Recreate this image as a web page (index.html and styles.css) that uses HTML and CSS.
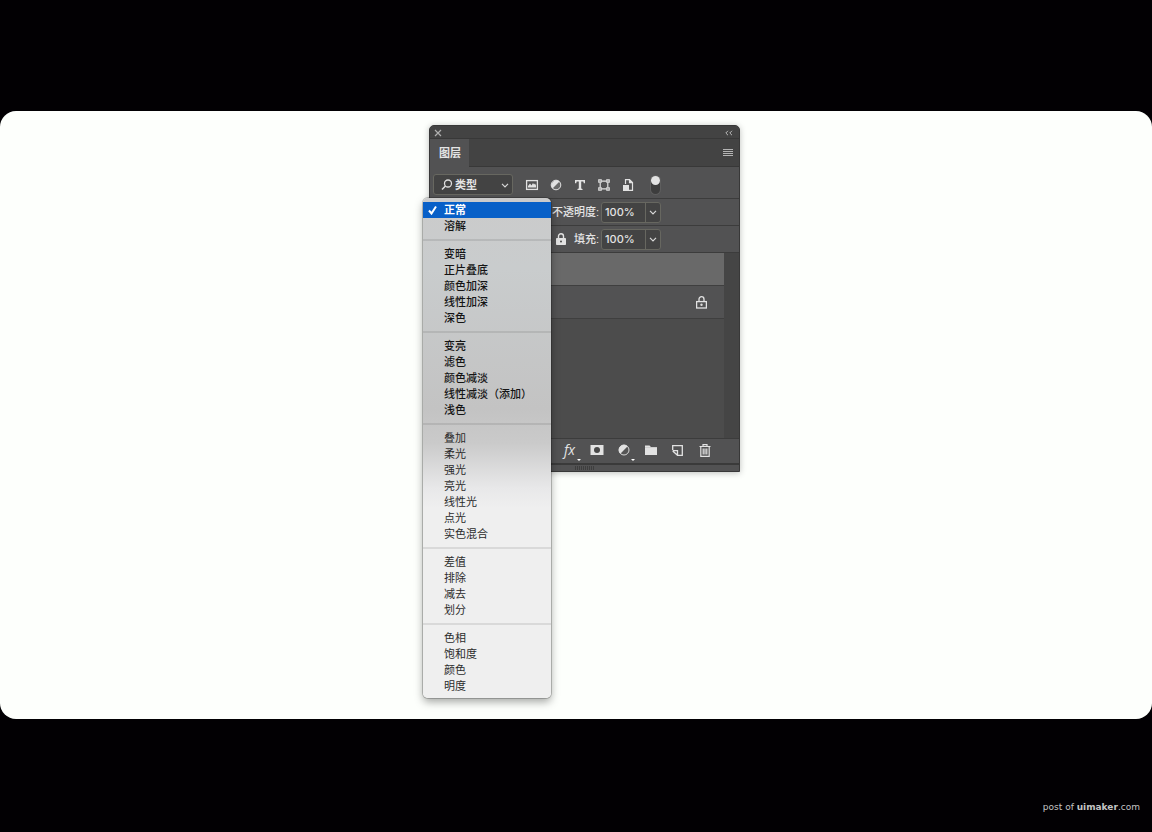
FILE: index.html
```
<!DOCTYPE html>
<html lang="zh-CN">
<head>
<meta charset="utf-8">
<meta name="viewport" content="width=device-width, initial-scale=1">
<title>图层</title>
<link rel="stylesheet" href="styles.css">
</head>
<body>
<main class="stage">
  <div class="workspace">
    <section class="panel" aria-label="图层">
      <header class="titlebar">
        <button class="plain" aria-label="关闭"><svg width="8" height="8" viewBox="0 0 8 8"><path d="M1 1l6 6M7 1L1 7" stroke="#b0b0b0" stroke-width="1.200"/></svg></button>
        <button class="plain" aria-label="折叠"><svg width="8" height="6" viewBox="0 0 8 6"><path d="M3 .8L.8 3 3 5.200M7 .8L4.800 3 7 5.200" fill="none" stroke="#b8b8b8"/></svg></button>
      </header>
      <div class="tabs">
        <button class="tab">图层</button>
        <button class="plain" aria-label="面板菜单"><svg width="10" height="8" viewBox="0 0 10 8"><path d="M0 .5h10M0 2.500h10M0 4.500h10M0 6.500h10" stroke="#b4b4b4"/></svg></button>
      </div>
      <div class="filters">
        <label class="kind">
          <svg class="kind-icon" width="12" height="12" viewBox="0 0 12 12"><circle cx="7" cy="4.500" r="3.500" fill="none" stroke="#ddd" stroke-width="1.300"/><path d="M4.500 7L1 10.500" stroke="#ddd" stroke-width="1.600"/></svg>
          <select class="kind-select" aria-label="筛选"><option>类型</option></select>
          <svg class="kind-arrow" width="8" height="5" viewBox="0 0 8 5"><path d="M1 .8l3 3 3-3" fill="none" stroke="#d8d8d8" stroke-width="1.200"/></svg>
        </label>
        <div class="filter-icons">
          <button class="plain" aria-label="像素图层"><svg width="14" height="12" viewBox="0 0 14 12"><rect x="1.600" y="1.600" width="10.800" height="8.800" fill="none" stroke="#e2e2e2" stroke-width="1.300"/><path d="M3 8.500V7l2-2.500L6.500 6.500 8 4l1 1.500 1-1 1 2v2z" fill="#e2e2e2"/></svg></button>
          <button class="plain" aria-label="调整图层"><svg width="12" height="12" viewBox="0 0 12 12"><circle cx="6" cy="6" r="4.800" fill="#6a6a6a" stroke="#e2e2e2"/><path d="M2.500 9.500A5 5 0 0 1 9.500 2.500z" fill="#e2e2e2"/></svg></button>
          <button class="plain" aria-label="文字图层"><svg width="12" height="12" viewBox="0 0 12 12"><path d="M1 1h10v3.200H9.800L9.300 2.600H7.200v6.900l1.300.4V11h-5V9.900l1.300-.4V2.600H2.700l-.5 1.600H1z" fill="#e2e2e2"/></svg></button>
          <button class="plain" aria-label="形状图层"><svg width="12" height="12" viewBox="0 0 12 12"><g fill="none" stroke="#e2e2e2" stroke-width="1.200"><path d="M2.200 3.500v5M9.800 3.500v5M3.500 2.200h5M3.500 9.800h5"/><path d="M.8 .8h2.400v2.400H.8zM8.800 .8h2.400v2.400H8.800zM.8 8.800h2.400v2.400H.8zM8.800 8.800h2.400v2.400H8.800z"/></g></svg></button>
          <button class="plain" aria-label="智能对象"><svg width="12" height="12" viewBox="0 0 12 12"><path d="M3.500 5V.6h4L10.500 3.500v7.900H7M7.500 .6v3h3" fill="none" stroke="#e2e2e2" stroke-width="1.200"/><path d="M1 6h6v6H1z" fill="#e2e2e2"/></svg></button>
        </div>
        <input class="switch" type="checkbox" aria-label="启用筛选" checked>
      </div>
      <div class="setting">
        <label for="opacity">不透明度:</label>
        <div class="number"><input id="opacity" type="text" value="100%"><button aria-label="不透明度滑块"><svg width="8" height="5" viewBox="0 0 8 5"><path d="M1 .8l3 3 3-3" fill="none" stroke="#d8d8d8" stroke-width="1.200"/></svg></button></div>
      </div>
      <div class="setting">
        <button class="plain lock-all" aria-label="锁定全部"><svg width="10" height="12" viewBox="0 0 10 12"><path d="M2.500 6V3.200a2.500 2.500 0 0 1 5 0V6" fill="none" stroke="#e2e2e2" stroke-width="1.400"/><rect y="5" width="10" height="7" rx=".8" fill="#e2e2e2"/><circle cx="5" cy="8.500" r="1" fill="#484848"/></svg></button>
        <label for="fill">填充:</label>
        <div class="number"><input id="fill" type="text" value="100%"><button aria-label="填充滑块"><svg width="8" height="5" viewBox="0 0 8 5"><path d="M1 .8l3 3 3-3" fill="none" stroke="#d8d8d8" stroke-width="1.200"/></svg></button></div>
      </div>
      <div class="layers">
        <div class="layer layer-active"></div>
        <div class="layer"><svg width="11" height="13" viewBox="0 0 11 13"><path d="M3 6V3.200a2.500 2.500 0 0 1 5 0V6" fill="none" stroke="#e2e2e2" stroke-width="1.300"/><rect x=".6" y="5.600" width="9.800" height="6.400" fill="none" stroke="#e2e2e2" stroke-width="1.300"/><circle cx="5.500" cy="8.800" r="1.200" fill="#ddd"/></svg></div>
      </div>
      <footer class="actions">
        <button class="plain fx has-more" aria-label="图层样式"><i>fx</i></button>
        <button class="plain" aria-label="添加蒙版"><svg width="14" height="11" viewBox="0 0 14 11"><rect x=".5" width="13" height="10" fill="#e2e2e2"/><circle cx="7" cy="5" r="3" fill="#484848"/></svg></button>
        <button class="plain has-more" aria-label="新建调整图层"><svg width="12" height="12" viewBox="0 0 12 12"><circle cx="6" cy="6" r="5" fill="#555" stroke="#d8d8d8"/><path d="M2.300 9.700A5.200 5.200 0 0 1 9.700 2.300z" fill="#e2e2e2"/></svg></button>
        <button class="plain" aria-label="新建组"><svg width="12" height="10" viewBox="0 0 12 10"><path d="M0 .5h4.500L6 2h6v8H0z" fill="#e2e2e2"/><path d="M0 2.500h12" stroke="#bbb" stroke-width=".5"/></svg></button>
        <button class="plain" aria-label="新建图层"><svg width="11" height="11" viewBox="0 0 11 11"><path d="M.7 5V.7h9.600v9.600H5.500L.7 6M.7 5.600h4.800v4.800" fill="none" stroke="#e2e2e2" stroke-width="1.300"/></svg></button>
        <button class="plain" aria-label="删除图层"><svg width="12" height="13" viewBox="0 0 12 13"><path d="M.5 2.500h11M4 2.500V.6h4v1.900M1.800 3v9.300h8.400V3M4.200 4.500v6M6 4.500v6M7.800 4.500v6" fill="none" stroke="#e2e2e2" stroke-width="1.200"/></svg></button>
      </footer>
      <div class="grip"></div>
    </section>

    <div class="menu" role="menu" aria-label="混合模式">
      <div class="group">
        <button class="item item-selected" role="menuitemradio" aria-checked="true"><svg class="check" width="10" height="10" viewBox="0 0 10 10"><path d="M1 5.500l2.500 3L8 1.500" fill="none" stroke="#fff" stroke-width="2"/></svg>正常</button>
        <button class="item" role="menuitemradio">溶解</button>
      </div>
      <div class="group">
        <button class="item" role="menuitemradio">变暗</button>
        <button class="item" role="menuitemradio">正片叠底</button>
        <button class="item" role="menuitemradio">颜色加深</button>
        <button class="item" role="menuitemradio">线性加深</button>
        <button class="item" role="menuitemradio">深色</button>
      </div>
      <div class="group">
        <button class="item" role="menuitemradio">变亮</button>
        <button class="item" role="menuitemradio">滤色</button>
        <button class="item" role="menuitemradio">颜色减淡</button>
        <button class="item" role="menuitemradio">线性减淡（添加）</button>
        <button class="item" role="menuitemradio">浅色</button>
      </div>
      <div class="group group-light">
        <button class="item" role="menuitemradio">叠加</button>
        <button class="item" role="menuitemradio">柔光</button>
        <button class="item" role="menuitemradio">强光</button>
        <button class="item" role="menuitemradio">亮光</button>
        <button class="item" role="menuitemradio">线性光</button>
        <button class="item" role="menuitemradio">点光</button>
        <button class="item" role="menuitemradio">实色混合</button>
      </div>
      <div class="group group-light">
        <button class="item" role="menuitemradio">差值</button>
        <button class="item" role="menuitemradio">排除</button>
        <button class="item" role="menuitemradio">减去</button>
        <button class="item" role="menuitemradio">划分</button>
      </div>
      <div class="group group-light">
        <button class="item" role="menuitemradio">色相</button>
        <button class="item" role="menuitemradio">饱和度</button>
        <button class="item" role="menuitemradio">颜色</button>
        <button class="item" role="menuitemradio">明度</button>
      </div>
    </div>
  </div>
</main>
<footer class="credit">post of <strong>uimaker</strong>.com</footer>
</body>
</html>
```
FILE: styles.css
```
* { box-sizing: border-box; }

body {
  margin: 0;
  min-height: 100vh;
  padding-top: 111px;
  display: flex;
  flex-direction: column;
  background: #020003;
  font-family: "Liberation Sans", "Noto Sans CJK SC", sans-serif;
  font-size: 11px;
  line-height: 16px;
}

button, input, select { font: inherit; color: inherit; }
svg { display: block; flex: none; }

.stage {
  flex: 1;
  padding: 14px 0 20px;
  display: flex;
  justify-content: center;
  align-items: flex-start;
  background: #fdfffc;
  border-radius: 16px;
}

.workspace {
  position: relative;
  width: 328px;
  min-height: 573px;
  padding-left: 17px;
}

.plain {
  display: flex;
  align-items: center;
  justify-content: center;
  padding: 0;
  border: 0;
  background: none;
}

/* Layers panel */
.panel {
  overflow: hidden;
  border: 1px solid #383838;
  border-radius: 5px 5px 0 0;
  background: #525253;
  color: #e4e4e4;
  font-weight: 500;
  box-shadow: 0 1px 6px rgba(0, 0, 0, .25);
}

.titlebar {
  height: 13px;
  padding: 2px 6px 0 4px;
  display: flex;
  align-items: center;
  justify-content: space-between;
  background: #434343;
  border-bottom: 1px solid #383838;
}

.tabs {
  height: 28px;
  padding-right: 6px;
  display: flex;
  justify-content: space-between;
  background: #434343;
  border-bottom: 1px solid #383838;
}

.tab {
  width: 39px;
  height: 28px;
  padding: 0 0 0 1px;
  border: 0;
  background: #525253;
  font-weight: 700;
}

.filters {
  height: 32px;
  padding: 4px 3px 0;
  display: flex;
  align-items: center;
  border-bottom: 1px solid #3c3c3c;
}

.kind { position: relative; width: 80px; }
.kind-icon, .kind-arrow { position: absolute; top: 5px; pointer-events: none; }
.kind-icon { left: 8px; }
.kind-arrow { right: 4px; top: 9px; }

.kind-select {
  display: block;
  appearance: none;
  width: 100%;
  height: 21px;
  padding: 0 20px 0 21px;
  border: 1px solid #676760;
  border-radius: 3px;
  background: #434343;
  font-weight: 700;
}

.filter-icons {
  margin-left: 7px;
  display: grid;
  grid-template-columns: repeat(5, 24px);
}

.switch {
  appearance: none;
  width: 9px;
  height: 18px;
  margin: 0 0 0 11px;
  border-radius: 5px;
  background: #3d3d3d;
  box-shadow: 0 0 0 1px #5e5e5e;
}

.switch::before {
  content: "";
  display: block;
  width: 9px;
  height: 9px;
  border-radius: 50%;
  background: #e2e2e2;
}

.setting {
  height: 27px;
  padding-right: 78px;
  display: flex;
  align-items: center;
  justify-content: flex-end;
  border-bottom: 1px solid #3c3c3c;
}

.lock-all { margin-right: 8px; }

.number {
  margin-left: 2px;
  width: 60px;
  height: 21px;
  display: flex;
  border: 1px solid #676760;
  border-radius: 3px;
  background: #434343;
}

.number input {
  min-width: 0;
  flex: 1;
  padding: 0 0 0 3px;
  border: 0;
  background: none;
  font-family: Inter, "Liberation Sans", sans-serif;
}

.number button {
  width: 15px;
  padding: 0 3px;
  border: 0;
  border-left: 1px solid #676760;
  background: none;
}

.layers {
  height: 185px;
  padding-right: 15px;
  background: linear-gradient(to left, #454545 15px, #4c4c4c 15px);
}

.layer {
  height: 33px;
  padding-right: 17px;
  display: flex;
  align-items: center;
  justify-content: flex-end;
  background: #525253;
  border-bottom: 1px solid #3f3f3f;
}

.layer-active { background: #696969; }

.actions {
  height: 27px;
  padding: 0 21px 2px 0;
  display: grid;
  grid-template-columns: repeat(6, 27px);
  justify-content: end;
  border-top: 1px solid #3c3c3c;
  border-bottom: 2px solid #3a3a3a;
}

.fx { font-family: "Open Sans", sans-serif; font-size: 14px; }

.has-more { position: relative; }

.has-more::after {
  content: "";
  position: absolute;
  right: 2px;
  bottom: 0;
  border: 2px solid transparent;
  border-top-color: #fff;
  border-bottom: 0;
}

.grip {
  height: 6px;
  background: repeating-linear-gradient(to right, #3e3e3e 0 1px, #525253 1px 2px) center / 20px 4px no-repeat;
}

/* Blend mode menu */
.menu {
  position: absolute;
  top: 73px;
  left: 11px;
  width: 128px;
  padding: 4px 0;
  border-radius: 5px;
  background: linear-gradient(to bottom, #cbcbcb 0, #c9cccd 70px, #c3c3c3 210px, #cacaca 245px, #e8e8e9 290px, #efefef 310px);
  color: #141414;
  box-shadow: 0 0 0 1px rgba(0, 0, 0, .2), 0 4px 9px rgba(0, 0, 0, .35);
}

.group { font-weight: 500; }
.group-light { color: #2c2c2c; font-weight: 400; }

.group + .group {
  margin-top: 5px;
  padding-top: 5px;
  border-top: 2px solid rgba(0, 0, 0, .09);
}

.item {
  position: relative;
  display: block;
  width: 100%;
  height: 16px;
  padding: 0 0 0 21px;
  border: 0;
  background: none;
  line-height: 16px;
  text-align: left;
  white-space: nowrap;
}

.item-selected {
  background: #0860c8;
  color: #fff;
  font-weight: 700;
}

.check { position: absolute; left: 5px; top: 3px; }

.credit {
  height: 113px;
  padding: 80px 12px 0;
  color: #c4c4c4;
  font-family: "DejaVu Sans", sans-serif;
  font-size: 9px;
  text-align: right;
}
```
